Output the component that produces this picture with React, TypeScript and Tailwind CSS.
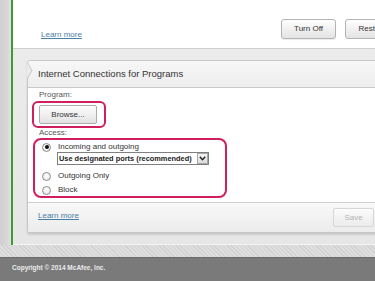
import React from "react";

function Radio({ checked }: { checked?: boolean }) {
  return (
    <span className="w-[9px] h-[9px] rounded-full border border-[#8a8a8a] bg-[radial-gradient(circle_at_50%_35%,#ffffff,#e4e4e4)] flex items-center justify-center shrink-0">
      {checked ? <span className="w-[4px] h-[4px] rounded-full bg-[#111]" /> : null}
    </span>
  );
}

export default function App() {
  return (
    <div
      className="w-[375px] h-[281px] overflow-hidden flex flex-col bg-white"
      style={{ fontFamily: '"Liberation Sans", Arial, sans-serif' }}
    >
      <div className="h-[245px] flex shrink-0">
        <div className="w-[11px] shrink-0 bg-[linear-gradient(to_right,#cfcfcf,#d8d8d8_70%,#e4e4e4)]" />
        <div className="w-[2px] shrink-0 bg-[#3d9b31]" />
        <div className="flex-1 flex flex-col min-w-0">
          {/* top white area */}
          <div className="h-[49px] shrink-0 bg-white border-b border-[#cfcfcf] flex">
            <div className="w-[268px] shrink-0 pl-[28px] pt-[30px]">
              <div className="text-[8px] leading-[10px] text-[#4a7fa6] underline">Learn more</div>
            </div>
            <div className="pt-[19px] flex gap-[9px] shrink-0">
              <div className="w-[55px] h-[20px] rounded-[3px] border border-[#b3b3b3] bg-[linear-gradient(#ffffff,#e3e3e3)] flex items-center justify-center text-[8px] text-[#333] shadow-[0_1px_1px_rgba(0,0,0,0.08)]">
                Turn Off
              </div>
              <div className="w-[55px] h-[20px] rounded-[3px] border border-[#b3b3b3] bg-[linear-gradient(#ffffff,#e3e3e3)] flex items-center justify-center text-[8px] text-[#333]">
                Restore
              </div>
            </div>
          </div>
          {/* gray area */}
          <div className="flex-1 bg-[linear-gradient(#ebebeb,#e6e6e6)] pl-[14px] pt-[11px] border-b border-[#f4f4f4]">
            <div className="w-[360px] border border-[#c6c6c6] rounded-l-[3px] bg-white shadow-[0_2px_2px_rgba(0,0,0,0.12)]">
              {/* header */}
              <div className="relative h-[27px] bg-[linear-gradient(#f7f7f7,#ededed)] border-b border-[#c9c9c9] flex items-center pl-[10px] rounded-tl-[3px]">
                <svg className="absolute left-[-1px] top-[1px]" width="7" height="18" viewBox="0 0 7 18">
                  <polygon points="0,0 5,8.5 0,17" fill="#ebebeb" />
                  <polyline points="0,0 5,8.5 0,17" fill="none" stroke="#c6c6c6" strokeWidth="1" />
                </svg>
                <span className="text-[9.5px] leading-[12px] text-[#333]">Internet Connections for Programs</span>
              </div>
              {/* body */}
              <div className="h-[114px] pl-[11px] flex flex-col">
                <div className="mt-[2px] h-[10px] text-[8px] leading-[10px] text-[#555]">Program:</div>
                <div className="mt-[1px] ml-[-7px] w-[74px] h-[27px] border-2 border-[#cf1f5e] rounded-[6px] flex items-center pl-[5px]">
                  <div className="w-[58px] h-[19px] rounded-[2px] border border-[#adadad] bg-[linear-gradient(#fdfdfd,#e2e2e2)] flex items-center justify-center text-[8px] text-[#333]">
                    Browse...
                  </div>
                </div>
                <div className="h-[9px] text-[8px] leading-[9px] text-[#555]">Access:</div>
                <div className="mt-[1px] ml-[-6px] w-[194px] h-[60px] border-2 border-[#cf1f5e] rounded-[8px] flex flex-col">
                  <div className="mt-[2px] h-[10px] flex items-center pl-[7px] gap-[7px]">
                    <Radio checked />
                    <span className="text-[8px] leading-[10px] text-[#333]">Incoming and outgoing</span>
                  </div>
                  <div className="ml-[22px] w-[152px] h-[13px] border border-[#7f7f7f] bg-white flex items-center justify-between">
                    <span className="pl-[1px] text-[7.4px] leading-[11px] font-bold text-[#222] whitespace-nowrap">
                      Use designated ports (recommended)
                    </span>
                    <span className="w-[11px] h-[11px] border border-[#a8a8a8] bg-[linear-gradient(#f6f6f6,#dcdcdc)] flex items-center justify-center">
                      <svg width="7" height="5" viewBox="0 0 7 5">
                        <polyline points="0.8,0.8 3.5,3.8 6.2,0.8" fill="none" stroke="#222" strokeWidth="1.4" />
                      </svg>
                    </span>
                  </div>
                  <div className="mt-[6px] h-[10px] flex items-center pl-[7px] gap-[7px]">
                    <Radio />
                    <span className="text-[8px] leading-[10px] text-[#333]">Outgoing Only</span>
                  </div>
                  <div className="mt-[4px] h-[10px] flex items-center pl-[7px] gap-[7px]">
                    <Radio />
                    <span className="text-[8px] leading-[10px] text-[#333]">Block</span>
                  </div>
                </div>
              </div>
              {/* footer */}
              <div className="h-[30px] border-t border-[#d0d0d0] bg-[linear-gradient(#f8f8f8,#ececec)] flex items-center justify-between pl-[10px] pr-[12px]">
                <span className="text-[8px] leading-[10px] text-[#4a7fa6] underline mt-[-3px]">Learn more</span>
                <div className="w-[41px] h-[19px] rounded-[2px] border border-[#d6d6d6] bg-[linear-gradient(#fbfbfb,#ececec)] flex items-center justify-center text-[8px] text-[#b3b3b3]">
                  Save
                </div>
              </div>
            </div>
          </div>
        </div>
      </div>
      <div className="h-[12px] shrink-0 bg-[repeating-linear-gradient(45deg,#d2d2d2_0px,#d2d2d2_1px,#dedede_1px,#dedede_3px)]" />
      <div className="flex-1 bg-[#7a7a7a] border-t border-[#6a6a6a] pl-[12px] pt-[5px]">
        <div className="text-[6.5px] leading-[10px] font-bold text-[#ececec]">Copyright © 2014 McAfee, Inc.</div>
      </div>
    </div>
  );
}
